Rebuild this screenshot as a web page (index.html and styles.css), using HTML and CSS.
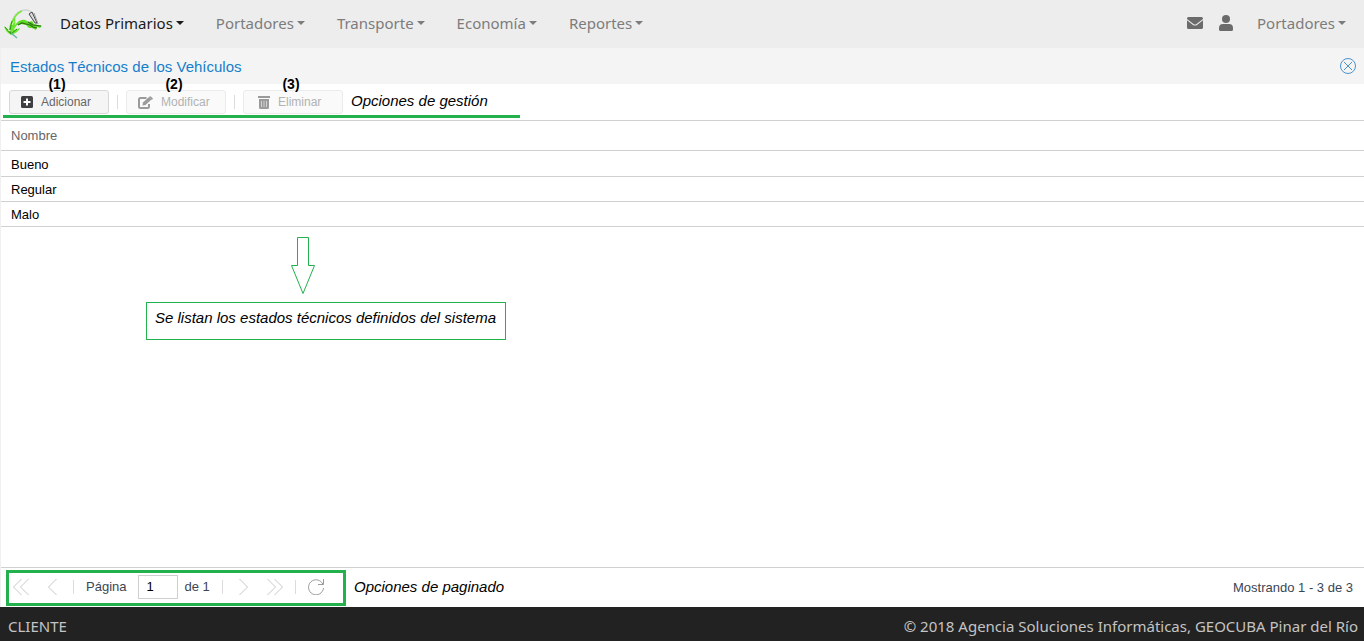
FILE: index.html
```html
<!DOCTYPE html>
<html lang="es">
<head>
<meta charset="utf-8">
<title>Estados Técnicos de los Vehículos</title>
<link rel="stylesheet" href="styles.css">
</head>
<body>
<header class="navbar">
  <a class="brand" href="#" aria-label="Inicio">
    <svg width="40" height="32" viewBox="0 0 40 32">
      <path d="M8 15C9 8 14 2 22 2c3 0 5 1 6 4" fill="none" stroke="#cfd6cf" stroke-width="1.500"/>
      <path d="M8 15C10 9 13 5 18 3" fill="none" stroke="#7be83a" stroke-width="1.500"/>
      <path d="M9 22C11 15 16 11 21 12l4 2 3-1 2 3 8 2-2 2-3-1-1 3-4-2-3 0-3-3-5-1-4 1z" fill="#5fdc22"/>
      <path d="M14 17l4-2 4 1 4 1 3 2 4 1M24 14l5 3 8 1" fill="none" stroke="#2d6a18" stroke-width="1.200"/>
      <path d="M7 27C3 25 1 22 0 18l5 4C5 17 7 13 11 9c1 5 0 9-1 13l6-2c-1 3-4 5-9 7z" fill="#6be62c"/>
      <path d="M1 19l6 7M8 13l-2 9 1 4 6-5" fill="none" stroke="#2c9412"/>
      <path d="M4 22l3 1M8 17l2-4" stroke="#d9f7b8"/>
      <path d="M7 25l6 5" stroke="#62b6a4" stroke-width="1.500"/>
      <path d="M25 6l3-2 5 11-2 0z" fill="#dcdcdc" stroke="#454545"/>
      <path d="M30 5l4 11" stroke="#999"/>
    </svg>
  </a>
  <nav class="menu">
    <a class="menu-link active" href="#">Datos Primarios</a>
    <a class="menu-link" href="#">Portadores</a>
    <a class="menu-link" href="#">Transporte</a>
    <a class="menu-link" href="#">Economía</a>
    <a class="menu-link" href="#">Reportes</a>
  </nav>
  <nav class="account">
    <a class="icon-link" href="#" aria-label="Mensajes">
      <svg width="16" height="16" viewBox="0 0 16 16"><path d="M1.500 2h13A1.500 1.500 0 0 1 16 3.500V4L9.500 9q-1.500 1-3 0L0 4v-.5A1.500 1.500 0 0 1 1.500 2zM0 5.300l6 4.600q2 1.300 4 0l6-4.600v7.200a1.500 1.500 0 0 1-1.500 1.500h-13A1.500 1.500 0 0 1 0 12.500z" fill="#6b6b6b"/></svg>
    </a>
    <a class="icon-link" href="#" aria-label="Usuario">
      <svg width="14" height="16" viewBox="0 0 14 16"><circle cx="7" cy="4" r="4" fill="#6b6b6b"/><path d="M4 9h6a4 4 0 0 1 4 4v1.500a1.500 1.500 0 0 1-1.500 1.500h-11A1.500 1.500 0 0 1 0 14.500V13a4 4 0 0 1 4-4z" fill="#6b6b6b"/></svg>
    </a>
    <a class="menu-link" href="#">Portadores</a>
  </nav>
</header>

<main class="panel">
  <div class="panel-title">
    <h1>Estados Técnicos de los Vehículos</h1>
    <button class="plain" type="button" aria-label="Cerrar">
      <svg width="16" height="16" viewBox="0 0 16 16" fill="none" stroke="#4b93cf"><circle cx="8" cy="8" r="7.500"/><path d="M4 4l8 8M12 4l-8 8"/></svg>
    </button>
  </div>

  <div class="toolbar">
    <div class="tool">
      <button class="btn" type="button">
        <svg width="12" height="12" viewBox="0 0 12 12"><rect width="12" height="12" rx="1.500" fill="#3f3f42"/><path d="M6 2.500v7M2.500 6h7" stroke="#fff" stroke-width="2"/></svg>
        <span>Adicionar</span>
      </button>
      <span class="mark">(1)</span>
    </div>
    <span class="sep"></span>
    <div class="tool">
      <button class="btn" type="button" disabled>
        <svg width="15" height="13" viewBox="0 0 15 13"><path d="M8.500 2H2.500Q1 2 1 3.500v7Q1 12 2.500 12h7q1.500 0 1.500-1.500V8" fill="none" stroke="#9b9b9b" stroke-width="2"/><path d="M4.500 9.500l.4-3L11 1l2.500 2.500L7.500 9z" fill="#9b9b9b"/><path d="M11.600.5q.6-.6 1.200 0L14.500 2q.6.700 0 1.300l-.6.600L11 1.100z" fill="#9b9b9b"/></svg>
        <span>Modificar</span>
      </button>
      <span class="mark">(2)</span>
    </div>
    <span class="sep"></span>
    <div class="tool">
      <button class="btn" type="button" disabled>
        <svg class="trash" width="12" height="13" viewBox="0 0 12 13"><path d="M0 0h12v2H0zM1 3h10v8.500q0 1.500-1.500 1.500h-7Q1 13 1 11.500z" fill="#9b9b9b"/><path d="M3.500 5v6M6 5v6M8.500 5v6" stroke="#d0d0d0"/></svg>
        <span>Eliminar</span>
      </button>
      <span class="mark">(3)</span>
    </div>
    <em class="note">Opciones de gestión</em>
    <span class="underline"></span>
  </div>

  <div class="grid">
    <table>
      <thead><tr><th scope="col">Nombre</th></tr></thead>
      <tbody>
        <tr><td>Bueno</td></tr>
        <tr><td>Regular</td></tr>
        <tr><td>Malo</td></tr>
      </tbody>
    </table>
    <div class="callout">
      <svg width="24" height="58" viewBox="0 0 24 58" fill="none" stroke="#22b14c"><path d="M6.500.5h11v28h6L12 56.500.5 28.500h6z"/></svg>
      <em class="note boxed">Se listan los estados técnicos definidos del sistema</em>
    </div>
  </div>

  <div class="paging">
    <div class="pager">
      <div class="pager-pair">
        <button class="plain" type="button" aria-label="Primera página"><svg width="16" height="16" viewBox="0 0 16 16"><path d="M8.500 0l-8 8 8 8M15.500 0l-8 8 8 8"/></svg></button>
        <button class="plain" type="button" aria-label="Página anterior"><svg width="16" height="16" viewBox="0 0 16 16"><path d="M11.500 0l-8 8 8 8"/></svg></button>
      </div>
      <span class="sep"></span>
      <label for="page">Página</label>
      <div class="page-field">
        <input class="page-input" id="page" type="text" value="1">
        <span>de 1</span>
      </div>
      <span class="sep"></span>
      <div class="pager-pair">
        <button class="plain" type="button" aria-label="Página siguiente"><svg width="16" height="16" viewBox="0 0 16 16"><path d="M4.500 0l8 8-8 8"/></svg></button>
        <button class="plain" type="button" aria-label="Última página"><svg width="16" height="16" viewBox="0 0 16 16"><path d="M.5 0l8 8-8 8M7.500 0l8 8-8 8"/></svg></button>
      </div>
      <span class="sep"></span>
      <button class="plain refresh" type="button" aria-label="Actualizar"><svg width="16" height="16" viewBox="0 0 16 16"><path d="M15.500 0v5.500H10M15 5.500A7.500 7.500 0 1 0 15.500 9"/></svg></button>
    </div>
    <em class="note">Opciones de paginado</em>
    <span class="summary">Mostrando 1 - 3 de 3</span>
  </div>
</main>

<footer class="footer">
  <span>CLIENTE</span>
  <span>© 2018 Agencia Soluciones Informáticas, GEOCUBA Pinar del Río</span>
</footer>
</body>
</html>
```

FILE: styles.css
```css
* { box-sizing: border-box; }

body {
  margin: 0;
  min-height: 100vh;
  display: flex;
  flex-direction: column;
  background: #f4f4f4;
  font-family: "Liberation Sans", Arial, sans-serif;
  font-size: 13px;
  color: #000;
}

svg { display: block; flex: none; }

.navbar {
  display: flex;
  align-items: center;
  height: 48px;
  padding: 0 2px 2px 4px;
  background: #ededed;
}

.navbar,
.footer {
  font-family: "Noto Sans", sans-serif;
  font-size: 15px;
}

.brand { padding-top: 2px; }

.menu,
.account { display: flex; align-items: center; }

.account { margin-left: auto; }

.menu-link {
  display: flex;
  align-items: center;
  gap: 3px;
  padding: 0 16px;
  line-height: 24px;
  color: #7c7c7c;
  text-decoration: none;
}

.menu-link::after {
  content: "";
  border: 4px solid transparent;
  border-top-color: currentColor;
  border-bottom: 0;
}

.menu-link.active { color: #1a1a1a; }

.icon-link { padding: 0 8px; }

.panel {
  flex: 1;
  display: flex;
  flex-direction: column;
  border-left: 1px solid #f0f0f0;
  background: #fff;
}

.panel-title {
  display: flex;
  align-items: center;
  justify-content: space-between;
  height: 36px;
  padding: 0 8px 0 9px;
  background: #f4f4f4;
}

.panel-title h1 {
  margin: 0;
  padding-top: 2px;
  font-size: 15px;
  font-weight: 400;
  line-height: 20px;
  color: #157fcc;
}

.plain {
  padding: 0;
  border: 0;
  background: none;
}

.toolbar {
  position: relative;
  display: flex;
  align-items: center;
  gap: 8px;
  height: 37px;
  padding-left: 8px;
  border-bottom: 1px solid #d0d0d0;
}

.tool { position: relative; }

.btn {
  display: flex;
  align-items: center;
  gap: 8px;
  width: 100px;
  height: 24px;
  padding: 0 11px;
  border: 1px solid #d8d8d8;
  border-radius: 3px;
  background: #f5f5f5;
  font-family: inherit;
  font-size: 12px;
  color: #666;
}

.btn:disabled {
  border-color: #ebebeb;
  background: #fafafa;
  color: #b2b2b2;
}

.trash { margin-left: 3px; }

.mark {
  position: absolute;
  top: -14px;
  left: 0;
  width: 96px;
  font-size: 14px;
  font-weight: 700;
  line-height: 16px;
  text-align: center;
}

.sep {
  width: 1px;
  height: 14px;
  background: #dcdcdc;
}

.note {
  padding-bottom: 2px;
  font-size: 15px;
  line-height: 18px;
}

.underline {
  position: absolute;
  left: 2px;
  bottom: 2px;
  width: 517px;
  height: 3px;
  background: #22b14c;
}

.grid { position: relative; flex: 1; }

table {
  width: 100%;
  border-collapse: separate;
  border-spacing: 0;
}

th,
td {
  height: 25px;
  padding: 1px 10px 0;
  border-bottom: 1px solid #d0d0d0;
  font-weight: 400;
  text-align: left;
}

th {
  height: 30px;
  padding-top: 0;
  color: #666;
}

tbody tr:first-child td { height: 26px; }

.callout {
  position: absolute;
  top: 116px;
  left: 145px;
}

.callout svg { margin: 0 0 7px 145px; }

.boxed {
  display: block;
  min-width: 360px;
  height: 38px;
  padding: 6px 8px;
  border: 1px solid #22b14c;
  white-space: nowrap;
}

.paging {
  display: flex;
  align-items: center;
  gap: 8px;
  height: 40px;
  padding: 0 11px 0 5px;
  border-top: 1px solid #d0d0d0;
  color: #3a4652;
}

.pager {
  display: flex;
  align-items: center;
  gap: 12px;
  width: 340px;
  height: 36px;
  padding: 0 4px 2px;
  border: 3px solid #22b14c;
}

.pager-pair { display: flex; gap: 16px; }

.page-field {
  display: flex;
  align-items: center;
  gap: 6px;
}

.pager svg {
  fill: none;
  stroke: #c8c8c8;
}

.pager .refresh svg { stroke: #9c9c9c; }

.page-input {
  width: 40px;
  height: 24px;
  padding: 0 7px;
  border: 1px solid #cfcfcf;
  font: inherit;
  color: #000;
}

.paging .note { color: #000; }

.summary { margin-left: auto; }

.footer {
  display: flex;
  align-items: center;
  justify-content: space-between;
  height: 34px;
  padding: 4px 6px 0 8px;
  background: #222;
  color: #c4c4c4;
}
```
